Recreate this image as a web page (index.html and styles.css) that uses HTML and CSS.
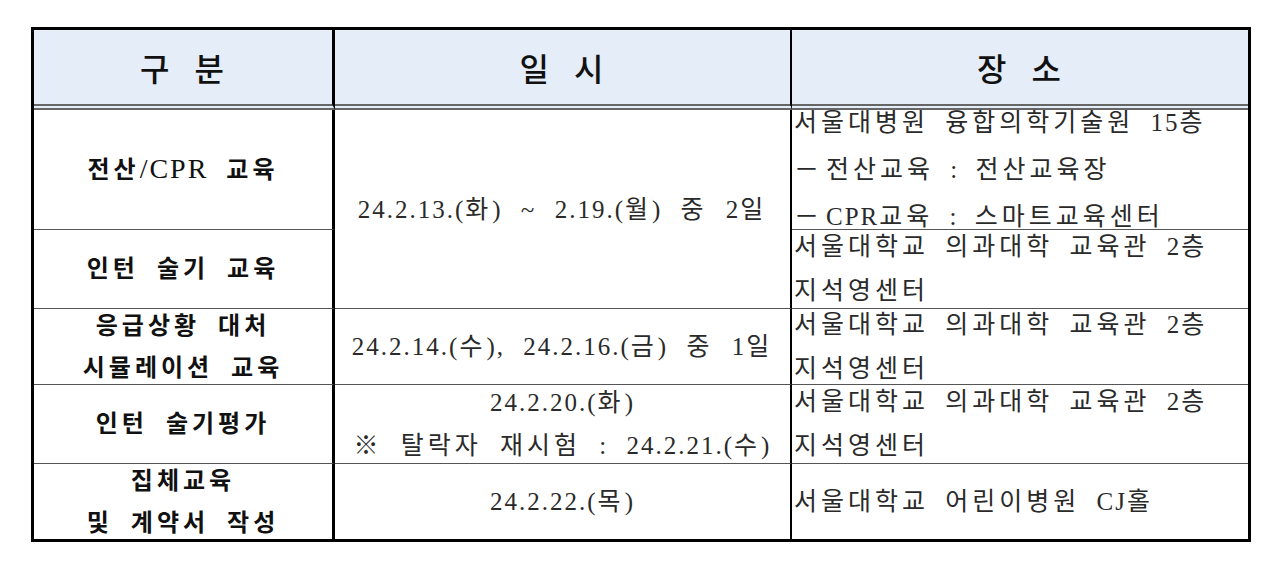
FILE: index.html
```html
<!DOCTYPE html>
<html lang="ko">
<head>
<meta charset="utf-8">
<title>교육 일정</title>
<link rel="stylesheet" href="styles.css">
</head>
<body>
<div class="table">
  <div class="cell head c1">구 분</div>
  <div class="cell head c2">일 시</div>
  <div class="cell head c3 center">장 소</div>

  <div class="cell c1"><div class="line">전산<span class="lat">/CPR</span> 교육</div></div>
  <div class="cell c2 tall"><div class="line"><span class="n">24.2.13.(</span>화<span class="n">)</span> <span class="n">~</span> <span class="n">2.19.(</span>월<span class="n">)</span> 중 <span class="n">2</span>일</div></div>
  <div class="cell c3">
    <div class="line">서울대병원 융합의학기술원 <span class="n">15</span>층</div>
    <div class="line"><span class="dash">－ </span>전산교육 <span class="n">:</span> 전산교육장</div>
    <div class="line"><span class="dash">－ </span><span class="n">CPR</span>교육 <span class="n">:</span> 스마트교육센터</div>
  </div>

  <div class="cell c1"><div class="line">인턴 술기 교육</div></div>
  <div class="cell c3">
    <div class="line">서울대학교 의과대학 교육관 <span class="n">2</span>층</div>
    <div class="line">지석영센터</div>
  </div>

  <div class="cell c1">
    <div class="line">응급상황 대처</div>
    <div class="line">시뮬레이션 교육</div>
  </div>
  <div class="cell c2"><div class="line"><span class="n">24.2.14.(</span>수<span class="n">),</span> <span class="n">24.2.16.(</span>금<span class="n">)</span> 중 <span class="n">1</span>일</div></div>
  <div class="cell c3">
    <div class="line">서울대학교 의과대학 교육관 <span class="n">2</span>층</div>
    <div class="line">지석영센터</div>
  </div>

  <div class="cell c1"><div class="line">인턴 술기평가</div></div>
  <div class="cell c2 pair">
    <div class="line"><span class="n">24.2.20.(</span>화<span class="n">)</span></div>
    <div class="line">※ 탈락자 재시험 <span class="n">:</span> <span class="n">24.2.21.(</span>수<span class="n">)</span></div>
  </div>
  <div class="cell c3">
    <div class="line">서울대학교 의과대학 교육관 <span class="n">2</span>층</div>
    <div class="line">지석영센터</div>
  </div>

  <div class="cell c1 end">
    <div class="line">집체교육</div>
    <div class="line">및 계약서 작성</div>
  </div>
  <div class="cell c2 end"><div class="line"><span class="n">24.2.22.(</span>목<span class="n">)</span></div></div>
  <div class="cell c3 end"><div class="line">서울대학교 어린이병원 <span class="n">CJ</span>홀</div></div>
</div>
</body>
</html>
```

FILE: styles.css
```css
html, body {
  margin: 0;
  padding: 0;
  background: #ffffff;
}

.table {
  margin: 27px 0 0 31px;
  width: 1220px;
  height: 515px;
  box-sizing: border-box;
  border: 3px solid #000;
  display: grid;
  grid-template-columns: 301px 457px 456px;
  grid-template-rows: 80px 120px 79px 76px 79px 75px;
  background: #fff;
}

.cell {
  box-sizing: border-box;
  border-bottom: 1px solid #555;
  display: flex;
  flex-direction: column;
  justify-content: center;
  align-items: center;
  text-align: center;
  white-space: nowrap;
  min-height: 0;
}

.c1 {
  grid-column: 1;
  border-right: 3px solid #000;
  font-family: "Liberation Serif", "Noto Sans CJK KR", serif;
  font-weight: 700;
  font-size: 24px;
  letter-spacing: 4px;
  word-spacing: 8px;
  line-height: 42px;
  color: #111;
}

.c2 {
  grid-column: 2;
  border-right: 2px solid #000;
  font-family: "Liberation Serif", "Noto Sans CJK KR", serif;
  font-weight: 400;
  font-size: 25px;
  letter-spacing: 4px;
  word-spacing: 8px;
  line-height: 43px;
  color: #2a2a2a;
}

.c3 {
  grid-column: 3;
  align-items: flex-start;
  text-align: left;
  padding-left: 2px;
  font-family: "Liberation Serif", "Noto Sans CJK KR", serif;
  font-weight: 400;
  font-size: 25px;
  letter-spacing: 4px;
  word-spacing: 6px;
  line-height: 44px;
  color: #2a2a2a;
}

.tall {
  grid-row: span 2;
}

.head {
  background: #e4edf8;
  border-bottom: 6px double #666;
  font-family: "Noto Sans CJK KR", sans-serif;
  font-weight: 500;
  font-size: 32px;
  letter-spacing: 2px;
  word-spacing: 12px;
  line-height: 40px;
  color: #111;
}

.head.center {
  align-items: center;
  padding-left: 0;
}

.end {
  border-bottom: none;
}

.lat {
  font-family: "Liberation Serif", serif;
  font-weight: 400;
  font-size: 28px;
  letter-spacing: 2px;
}

.n {
  font-family: "Liberation Serif", serif;
  font-size: 25px;
  letter-spacing: 2px;
}

.dash {
  font-family: "Noto Sans CJK KR", sans-serif;
  letter-spacing: 0;
  word-spacing: 0;
}
```
